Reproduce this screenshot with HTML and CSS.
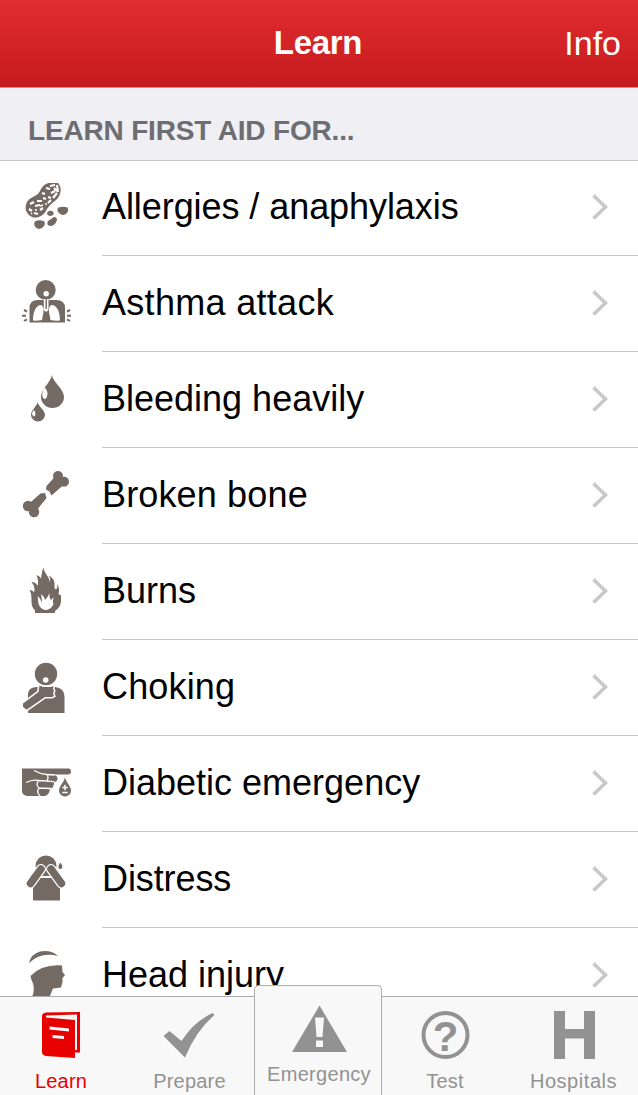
FILE: index.html
```html
<!DOCTYPE html>
<html lang="en">
<head>
<meta charset="utf-8">
<title>Learn</title>
<link rel="stylesheet" href="styles.css">
</head>
<body>
<div class="app">
  <header class="navbar"><h1 class="title">Learn</h1><a class="info">Info</a></header>
  <h2 class="section">LEARN FIRST AID FOR...</h2>
  <ul class="list">
    <li class="row">
      <svg class="icon" viewBox="0 160 102 95"><path d="M49 183H58Q62 187 60 194C58 201 51 202 47 209C44 216 37 219 32 217C26 214 24 208 27 202C31 196 37 197 40 191C42 187 44 184 49 183Z"/><g class="cut"><path d="M30 204l4-2M37 201h5M29 209l3 2M35 206l5-1M34 213l4 1M40 210l3-2M43 198l3 1M42 193l3 1M48 203l3-3M48 197l3 1M46 188l4 1M51 193l4-2M53 198l4-5M50 186l5-1M57 185l1 7M54 188l3 3" stroke-width="2.2"/><path d="M35 210h2M45 204h2M31 213l1 1M40 206l3-1" stroke-width="1.5"/></g><path d="M35.500 221Q39.500 219.500 43.500 221Q46 223 44 226Q42 229 39 229Q34 228 34.200 223ZM48 221L54 217Q57 217 57 220Q55 226 50 226Q46 225 48 221ZM48 211.500Q50.500 210 53 211.500Q55 215 51 216Q47 216 47 213ZM58.500 207.500Q63 206 67.500 207.500Q69 210 67 213Q63 217 59 213Q56 210 58.500 207.500Z"/></svg>
      <span class="label">Allergies / anaphylaxis</span><svg class="chev" viewBox="0 0 16 26"><path d="M1.500 1.500L13.500 13L1.500 24.500"/></svg></li>
    <li class="row">
      <svg class="icon" viewBox="0 256 102 95"><circle cx="45.700" cy="290" r="10"/><path d="M29.500 322.500V308Q29.500 300 38 300H56Q65 300 65 308V322.500Z"/><circle cx="46.200" cy="293.800" r="2.700" class="w"/><path class="w" d="M43.800 299H48.500V310L46.200 312L43.800 310ZM33 320.500C33 312 36 305 41 305Q44 306 43.500 312L42 320Q37 321 33 320.500ZM60 320.500C60 312 57 305 51.500 305Q48.500 306 49 312L50.500 320Q55 321 60 320.500Z"/><path d="M45.500 299h1.400v10h-1.400z"/><path class="line" stroke-width="2" d="M22 315.700h4M24 310l3 1.500M24 321l3-1.700M67 315.700h4M67 311.500l3-1.500M67 319.300l3 1.700"/></svg>
      <span class="label l2">Asthma attack</span><svg class="chev" viewBox="0 0 16 26"><path d="M1.500 1.500L13.500 13L1.500 24.500"/></svg></li>
    <li class="row">
      <svg class="icon" viewBox="0 352 102 95"><path d="M51.800 375C53 382 64 389 64 397A11.500 11 0 0 1 41 397C41 389 51 382 51.800 375ZM37.700 402C38 406 45 410 45 415A7 6.500 0 0 1 31 415C31 410 37 406 37.700 402Z"/><path class="w" d="M44.500 387.500Q47.500 390 47.500 394Q47 399 44.500 399Q42 398 42.200 394Q42.500 390 44.500 387.500ZM33.700 410Q35.600 411.500 35.500 414Q35 416.500 33.700 416.500Q32 415.500 32 413Z"/></svg>
      <span class="label">Bleeding heavily</span><svg class="chev" viewBox="0 0 16 26"><path d="M1.500 1.500L13.500 13L1.500 24.500"/></svg></li>
    <li class="row">
      <svg class="icon" viewBox="0 448 102 95"><circle cx="58" cy="476" r="5"/><circle cx="64" cy="481.700" r="5"/><circle cx="28" cy="506" r="5.200"/><circle cx="34" cy="512" r="5.200"/><path d="M55.500 476L64 484.500L51.500 495.500L49.500 491.500L46 489.500L46.500 486ZM28.500 504L40.500 493.500L45 493L46.500 498L36.500 510.500L33 512Z"/></svg>
      <span class="label l4">Broken bone</span><svg class="chev" viewBox="0 0 16 26"><path d="M1.500 1.500L13.500 13L1.500 24.500"/></svg></li>
    <li class="row">
      <svg class="icon" viewBox="0 544 102 95"><path d="M43.500 567C43 572 50 577 50 583Q51 579 49 575.500Q55 579 54.500 585Q54 590 56.500 589Q58 587 57 584Q60 588 58.500 594L61 595.500V602Q60 608 55 611V613H35V610.500Q31 607 31.500 599Q32 594 29.500 590Q33 590 34 592.500Q35 590 34 586L31.500 582Q36 582 37.500 586Q39 581 36.500 575Q41 577 41 579Q42 571 43.500 567Z"/><path class="w" d="M49.500 593Q49 598 51 600L54 597Q52 601 53.500 604Q51 610 45 610Q39 609 38 601L37.800 596Q41 599 42 603Q42 599 41 594Q44 596 45 600Q48 597 49.500 593Z"/></svg>
      <span class="label">Burns</span><svg class="chev" viewBox="0 0 16 26"><path d="M1.500 1.500L13.500 13L1.500 24.500"/></svg></li>
    <li class="row">
      <svg class="icon" viewBox="0 640 102 95"><circle cx="46" cy="674" r="11.200"/><path d="M28 713V697Q27 687 37 687H55Q64.500 688 64.500 697V713Z"/><circle class="w" cx="45.700" cy="680" r="2.800"/><path d="M39.500 685.500L43 687H51L53.500 686L53 689L54 691L53 693.500L54 696L52 697H45L27 709.500Q22 708 23 703.500L38.500 692Z" stroke="#fff" stroke-width="3" paint-order="stroke"/></svg>
      <span class="label l4">Choking</span><svg class="chev" viewBox="0 0 16 26"><path d="M1.500 1.500L13.500 13L1.500 24.500"/></svg></li>
    <li class="row">
      <svg class="icon" viewBox="0 736 102 95"><path d="M22 768.500H69Q71 769 71 771.500Q71 774.500 68 774.500H54Q58 776 57.500 779.500Q57 781.500 54 782Q54 788 50 789Q49 796 44 796H27Q22 795 22 791Z"/><path class="cut" stroke-width="1.300" d="M34 770.500Q40 774 47 774.500L55 775M47 774.500Q49 778 47 780.500M26 782.500Q33 779 39 780.500L54 781.700M39 780.500Q35 784 39 788L51 788.500M39 788Q36 792 40 796"/><path d="M65 777C65.500 782 71 786 71 790.500A6 6 0 0 1 59 790.500C59 786 64.500 782 65 777Z"/><path class="cut" stroke-width="1.500" d="M62.300 787.500h5.400M65 784.800v5.400M62.300 792.500h5.400"/></svg>
      <span class="label">Diabetic emergency</span><svg class="chev" viewBox="0 0 16 26"><path d="M1.500 1.500L13.500 13L1.500 24.500"/></svg></li>
    <li class="row">
      <svg class="icon" viewBox="0 832 102 95"><circle cx="46" cy="866" r="10.500"/><path d="M33 900.500V878H60V900.500Z"/><path class="cut" stroke-width="2" d="M36 877H56"/><g stroke-linecap="round"><path class="cut" stroke-width="10" d="M30.500 883.500L41 869M61.500 883.500L51 869"/><path class="line" stroke-width="7.500" d="M30.500 883.500L41 869M61.500 883.500L51 869"/></g><path d="M60.300 862.500Q62.500 865 62.300 867A2 2 0 0 1 58.300 867Q58.500 865 60.300 862.500Z"/></svg>
      <span class="label l8">Distress</span><svg class="chev" viewBox="0 0 16 26"><path d="M1.500 1.500L13.500 13L1.500 24.500"/></svg></li>
    <li class="row">
      <svg class="icon" viewBox="0 928 102 95"><path d="M29 963Q31 954 40 951.500Q51 949.500 58 956Q41 951.500 29 963ZM30.500 976Q42 964 62 965.500L62.500 972L65 975L62.500 978V982L61 987.500L53 988.500L49.500 997H32Q36 988 31.500 980Z"/></svg>
      <span class="label">Head injury</span><svg class="chev" viewBox="0 0 16 26"><path d="M1.500 1.500L13.500 13L1.500 24.500"/></svg></li>
  </ul>
  <nav class="tabs">
    <a class="tab active"><svg viewBox="0 997 122 71"><path d="M42 1016Q42 1013 46 1012.500L80 1012V1052.500H75V1058L46 1056Q42 1055 42 1052Z"/><path class="bg" d="M46 1015.500L77 1014.500V1050H75V1020L46 1017.500ZM49.500 1026.500L69 1028.500V1031.500L49.500 1029.500ZM52.500 1035L64 1036V1039L52.500 1038Z"/></svg><span class="wide">Learn</span></a>
    <a class="tab"><svg viewBox="128.500 997 122 71"><path d="M163 1036L169 1031L181 1041Q193 1022 212 1013L214 1015Q196 1030 184.500 1057.500Z"/></svg><span class="wide">Prepare</span></a>
    <a class="tab raised"><svg viewBox="257 986 122 75"><path d="M319.500 1005.500L347 1052H292Z"/><path class="bg" d="M315 1017.500H324L322.500 1037H316.500ZM316 1040.500H323V1047H316Z"/></svg><span class="wider">Emergency</span></a>
    <a class="tab"><svg viewBox="384.500 997 122 71"><circle cx="445" cy="1035" r="22" fill="none" stroke="#929292" stroke-width="4"/><text class="q" x="445" y="1050.500" text-anchor="middle">?</text></svg><span class="wide test">Test</span></a>
    <a class="tab"><svg viewBox="512 997 122 71"><path d="M554 1011H565V1029H584V1011H595V1059H584V1038.500H565V1059H554Z"/></svg><span class="widest">Hospitals</span></a>
  </nav>
</div>
</body>
</html>
```
FILE: styles.css
```css
* { box-sizing: border-box; }
body { margin: 0; font-family: "Liberation Sans", Arial, sans-serif; background: #fff; }
.app { width: 638px; height: 1095px; overflow: hidden; position: relative; }
.navbar { height: 88px; background: linear-gradient(#e12d31, #c51a1d); color: #fff; display: grid; grid-template-columns: 1fr auto 1fr; align-items: center; padding: 0 17px 1px 15px; border-bottom: 1px solid #c98a90; }
.title { grid-column: 2; margin: 0; font-size: 33px; line-height: 40px; font-weight: bold; letter-spacing: -0.3px; }
.info { justify-self: end; font-size: 34px; line-height: 40px; }
.section { margin: 0; height: 73px; padding: 27px 28px 0; background: #efeff4; border-bottom: 1px solid #c8c7cc; color: #6d6d72; font-size: 28px; line-height: 32px; font-weight: bold; letter-spacing: -0.18px; }
.list { list-style: none; margin: -1px 0 0; padding: 0; }
.row { height: 96px; display: grid; grid-template-columns: 102px 1fr; position: relative; }
.icon { width: 102px; height: 95px; fill: #746a64; }
.icon .w { fill: #fff; }
.cut { fill: none; stroke: #fff; }
.line { fill: none; stroke: #746a64; }
.label { border-bottom: 1px solid #c8c7cc; font-size: 36px; line-height: 94px; color: #000; white-space: nowrap; }
.row:first-child .label { letter-spacing: -0.07px; }
.l2 { letter-spacing: 0.3px; }
.l4 { letter-spacing: 0.15px; }
.l8 { letter-spacing: -0.1px; }
.chev { position: absolute; right: 30px; top: 34px; width: 16px; height: 26px; fill: none; stroke: #c7c7cc; stroke-width: 3.6; }
.tabs { position: absolute; left: -3px; top: 996px; width: 644px; height: 99px; background: #f8f8f8; border-top: 1px solid #adadad; display: grid; grid-template-columns: 128px 129px 128px 127px 128px; }
.tab { display: flex; flex-direction: column; align-items: center; color: #929292; fill: #929292; font-size: 20px; line-height: 26px; }
.tab svg { width: 122px; height: 71px; flex: none; }
.tab .bg { fill: #f8f8f8; }
.active { color: #e60000; fill: #e60000; }
.raised { margin-top: -12px; height: 112px; background: #f8f8f8; border: 1px solid #adadad; border-bottom: 0; border-radius: 5px 5px 0 0; }
.raised svg { height: 75px; }
.wide { letter-spacing: 0.2px; }
.wider { letter-spacing: 0.3px; margin-left: 2px; }
.widest { letter-spacing: 0.55px; margin-left: 1px; }
.test { margin-right: 1px; }
.q { font-size: 42px; font-weight: bold; }
```
